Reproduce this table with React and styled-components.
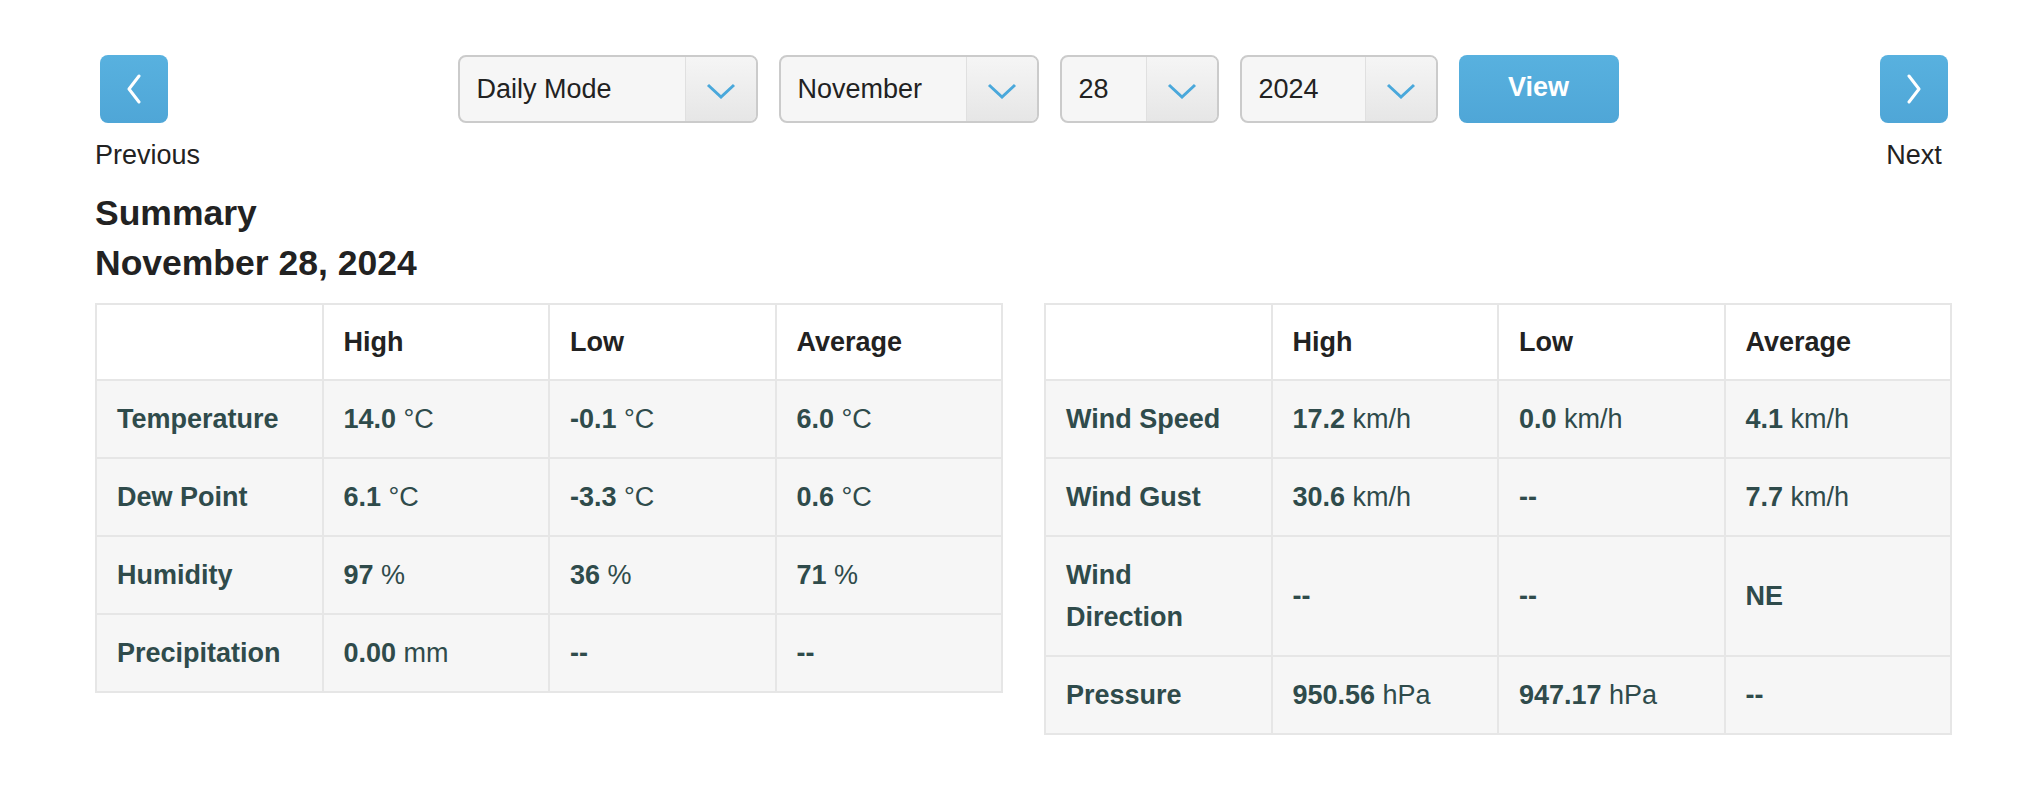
import styled, { createGlobalStyle } from "styled-components";

const GlobalStyle = createGlobalStyle`
  body {
    margin: 0;
    background: #fff;
    font-family: "Liberation Sans", Arial, Helvetica, sans-serif;
    color: #222;
  }
`;

const leftRows = [
  { label: "Temperature", cells: [["14.0", "°C"], ["-0.1", "°C"], ["6.0", "°C"]] },
  { label: "Dew Point", cells: [["6.1", "°C"], ["-3.3", "°C"], ["0.6", "°C"]] },
  { label: "Humidity", cells: [["97", "%"], ["36", "%"], ["71", "%"]] },
  { label: "Precipitation", cells: [["0.00", "mm"], ["--"], ["--"]] },
];

const rightRows = [
  { label: "Wind Speed", cells: [["17.2", "km/h"], ["0.0", "km/h"], ["4.1", "km/h"]] },
  { label: "Wind Gust", cells: [["30.6", "km/h"], ["--"], ["7.7", "km/h"]] },
  { label: "Wind Direction", cells: [["--"], ["--"], ["NE"]] },
  { label: "Pressure", cells: [["950.56", "hPa"], ["947.17", "hPa"], ["--"]] },
];

const Chevron = ({ dir }) => (
  <svg width="18" height="30" viewBox="0 0 18 30">
    <polyline
      points={dir === "left" ? "14,2 4,15 14,28" : "4,2 14,15 4,28"}
      fill="none"
      stroke="#fff"
      strokeWidth="3"
      strokeLinecap="round"
      strokeLinejoin="round"
    />
  </svg>
);

const DownArrow = () => (
  <svg width="30" height="16" viewBox="0 0 30 16">
    <polyline points="2,2 15,14 28,2" fill="none" stroke="#4aa8db" strokeWidth="3" />
  </svg>
);

const Select = ({ value, width }) => (
  <StyledSelect $width={width}>
    <span className="select-value">{value}</span>
    <span className="select-arrow"><DownArrow /></span>
  </StyledSelect>
);

const SummaryTable = ({ rows }) => (
  <StyledTable>
    <thead>
      <tr>
        <th></th>
        <th>High</th>
        <th>Low</th>
        <th>Average</th>
      </tr>
    </thead>
    <tbody>
      {rows.map((row) => (
        <tr key={row.label}>
          <td className="row-label">{row.label}</td>
          {row.cells.map((cell, index) => (
            <td key={`${row.label}-${index}`}>
              <b>{cell[0]}</b>
              {cell[1] ? ` ${cell[1]}` : null}
            </td>
          ))}
        </tr>
      ))}
    </tbody>
  </StyledTable>
);

const App = () => {
  return (
    <Page>
      <GlobalStyle />
      <NavBar>
        <NavColumn>
          <NavButton $side="left"><Chevron dir="left" /></NavButton>
          <NavLabel>Previous</NavLabel>
        </NavColumn>
        <Controls>
          <Select value="Daily Mode" width={300} />
          <Select value="November" width={260} />
          <Select value="28" width={159} />
          <Select value="2024" width={198} />
          <ViewButton>View</ViewButton>
        </Controls>
        <NavColumn $right>
          <NavButton $side="right"><Chevron dir="right" /></NavButton>
          <NavLabel>Next</NavLabel>
        </NavColumn>
      </NavBar>
      <Heading>
        Summary
        <br />
        November 28, 2024
      </Heading>
      <Tables>
        <SummaryTable rows={leftRows} />
        <SummaryTable rows={rightRows} />
      </Tables>
    </Page>
  );
};

const Page = styled.div`
  padding: 55px 82px 40px 95px;
`;

const NavBar = styled.div`
  display: flex;
  justify-content: space-between;
  align-items: flex-start;
`;

const NavColumn = styled.div`
  display: flex;
  flex-direction: column;
  align-items: ${(p) => (p.$right ? "center" : "flex-start")};
  margin-right: ${(p) => (p.$right ? "4px" : "0")};
`;

const NavButton = styled.button`
  width: 68px;
  height: 68px;
  margin-left: ${(p) => (p.$side === "left" ? "5px" : "0")};
  border: none;
  border-radius: 8px;
  background: linear-gradient(#58b1df, #4fa6d7);
  display: flex;
  align-items: center;
  justify-content: center;
  padding: 0;
`;

const NavLabel = styled.div`
  margin-top: 16px;
  font-size: 27px;
  line-height: 32px;
  color: #222;
`;

const Controls = styled.div`
  display: flex;
  gap: 21px;
  margin-right: 4px;
`;

const StyledSelect = styled.div`
  width: ${(p) => p.$width}px;
  height: 68px;
  box-sizing: border-box;
  border: 2px solid #cbcbcb;
  border-radius: 8px;
  background: #f6f6f6;
  display: flex;
  overflow: hidden;

  .select-value {
    flex: 1;
    display: flex;
    align-items: center;
    padding-left: 17px;
    font-size: 27px;
    color: #222;
  }

  .select-arrow {
    width: 70px;
    display: flex;
    align-items: center;
    justify-content: center;
    border-left: 1px solid #e0e0e0;
    background: linear-gradient(#f5f5f5, #e6e6e6);
    padding-top: 4px;
  }
`;

const ViewButton = styled.button`
  width: 160px;
  height: 68px;
  border: none;
  border-radius: 8px;
  background: linear-gradient(#58b1df, #4fa6d7);
  color: #fff;
  font-family: "Liberation Sans", Arial, sans-serif;
  font-weight: bold;
  font-size: 27px;
  padding: 0 0 4px;
`;

const Heading = styled.h2`
  margin: 17px 0 15px;
  font-size: 35.5px;
  line-height: 50px;
  font-weight: bold;
  color: #222;
`;

const Tables = styled.div`
  display: grid;
  grid-template-columns: 1fr 1fr;
  gap: 41px;
  align-items: start;
`;

const StyledTable = styled.table`
  width: 100%;
  border-collapse: collapse;
  table-layout: fixed;
  font-size: 27px;
  line-height: 42px;

  th, td {
    border: 2px solid #e6e6e6;
    padding: 17px 20px;
    text-align: left;
    vertical-align: middle;
  }

  th {
    background: #fff;
    color: #222;
    font-weight: bold;
    padding-top: 16px;
    padding-bottom: 16px;
  }

  td {
    background: #f6f6f6;
    color: #2f4b4b;
  }

  .row-label {
    font-weight: bold;
  }
`;

export default App;
